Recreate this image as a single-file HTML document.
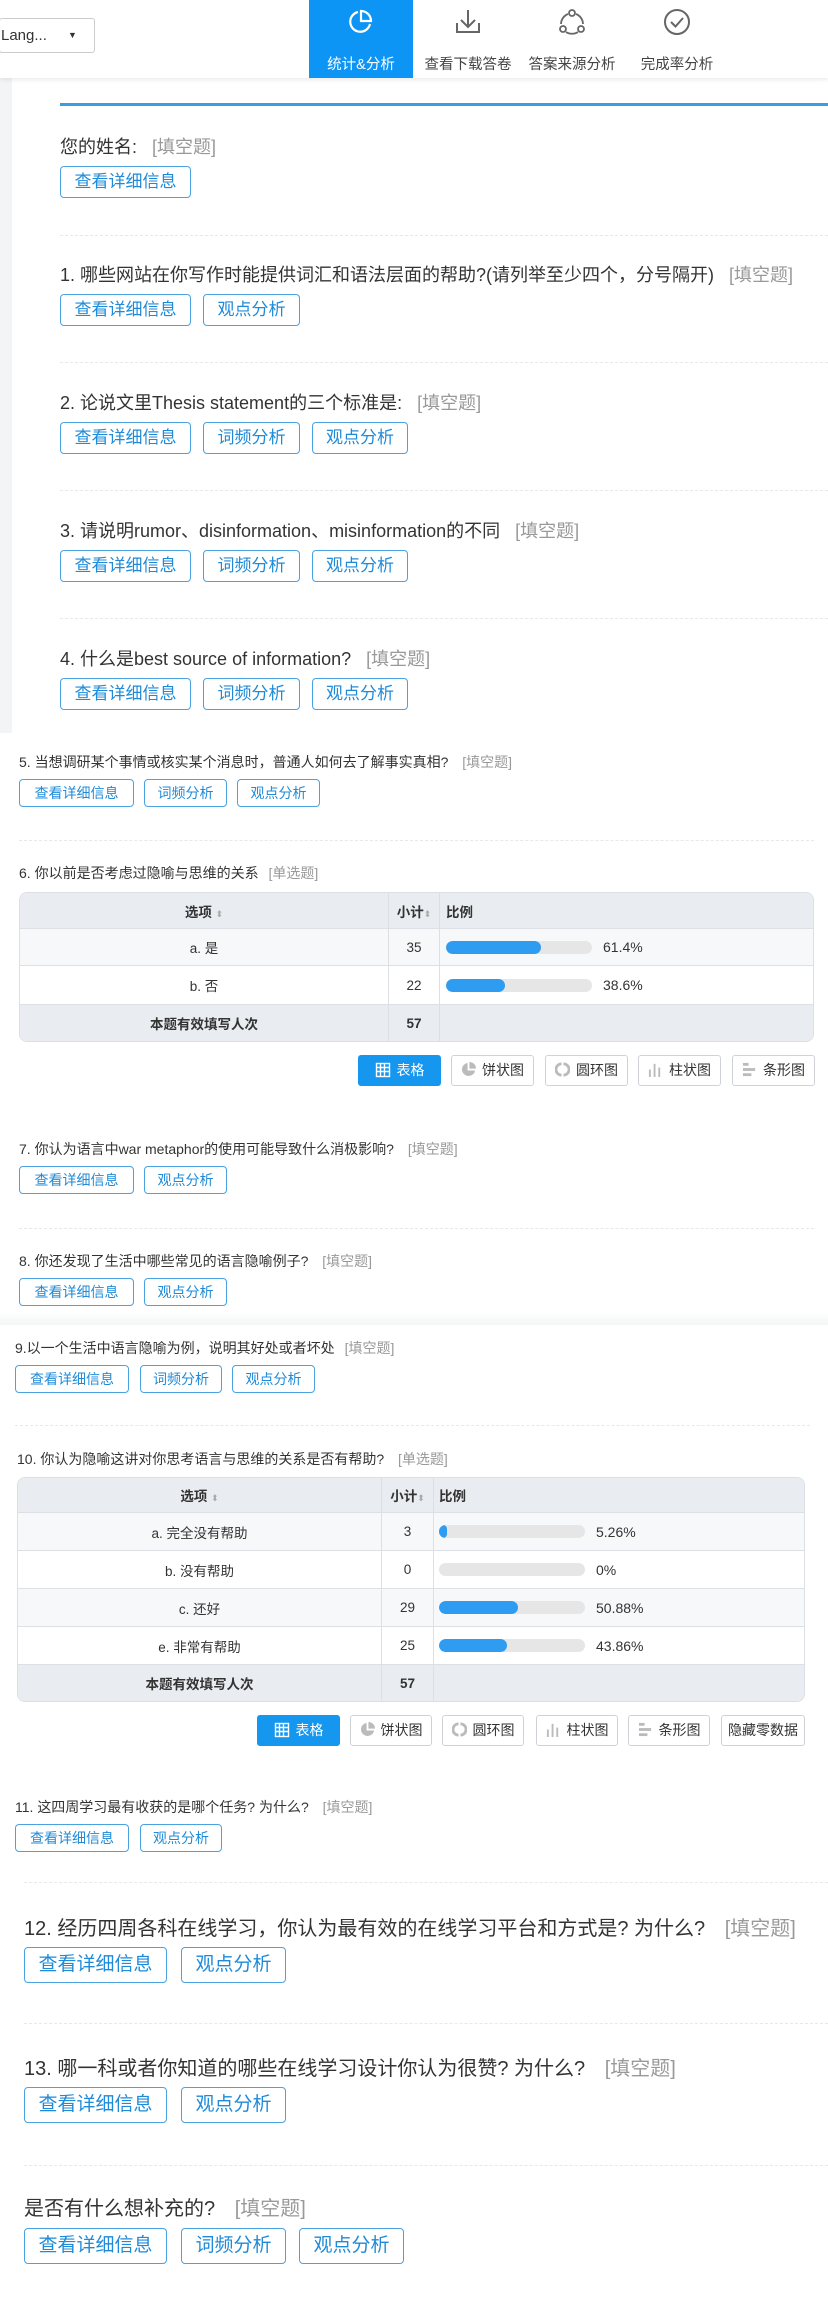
<!DOCTYPE html>
<html><head><meta charset="utf-8">
<style>
*{margin:0;padding:0;box-sizing:border-box}
body{width:828px;height:2309px;position:relative;background:#fff;font-family:"Liberation Sans","Noto Sans CJK SC",sans-serif;color:#333;overflow:hidden}
.a{position:absolute;white-space:nowrap}
.hdr{position:absolute;left:0;top:0;width:828px;height:78px;background:#fff;box-shadow:0 2px 4px rgba(0,0,0,.08);z-index:2}
.tab{position:absolute;top:0;width:104px;height:78px;text-align:center;font-size:14.5px;color:#444}
.tab svg{position:absolute;left:36px;top:6px}
.tab span{position:absolute;left:0;right:0;top:53px}
.tab.on{background:#0d95f6;color:#fff}
.q{position:absolute;white-space:nowrap;color:#333}
.q i{font-style:normal;color:#999;margin-left:10px}
.b{position:absolute;border:1px solid #4aa3e0;border-radius:4px;color:#1f8bd8;text-align:center;background:#fff}
.L .b{height:32px;line-height:30px;font-size:17px}
.S .b{height:28px;line-height:26px;font-size:14px}
.X .b{height:36px;line-height:34px;font-size:19px}
.d{position:absolute;height:0;border-top:1px dashed #e6e9ec}
table{position:absolute;border-collapse:separate;border-spacing:0;border:1px solid #dcdfe3;border-radius:8px;overflow:hidden;font-size:13.5px;color:#333}
td{border-bottom:1px solid #dcdfe3;border-right:1px solid #dcdfe3;text-align:center;padding:0}
tr td:last-child{border-right:none}
tr:last-child td{border-bottom:none}
.th td{background:#e9ecf0;font-weight:bold}
.r1 td{background:#f6f8fa}
.tot td{background:#e9ecf0;font-weight:bold}
.bar{display:inline-block;vertical-align:middle;height:13px;background:#e6e6e6;border-radius:7px;position:relative;overflow:hidden}
.bar b{position:absolute;left:0;top:0;bottom:0;background:#2e9cf0;border-radius:7px}
.pct{display:inline-block;vertical-align:middle;margin-left:11px;font-size:14px}
.sort{color:#aaa;font-size:9px;font-weight:normal}
.cb{position:absolute;height:31px;border:1px solid #cfd3d8;border-radius:3px;font-size:14px;color:#333;line-height:29px;text-align:center;background:#fff}
.cb.on{background:#1596ef;border-color:#1596ef;color:#fff}
.cb svg{vertical-align:middle;margin-right:6px;margin-top:-3px}
</style></head><body>

<div class="hdr">
  <div class="a" style="left:-1px;top:18px;width:96px;height:35px;border:1px solid #ccc;border-radius:3px;font-size:15px;line-height:33px;padding-left:1px">Lang...<span style="position:absolute;left:68px;top:0;font-size:9px">▼</span></div>
  <div class="tab on" style="left:309px"><svg width="32" height="32" viewBox="0 0 32 32" fill="none" stroke="#fff" stroke-width="2.2"><path d="M13 6 A10 10 0 1 0 25 18"/><path d="M16 5 A10 10 0 0 1 26 15 L16 15 Z"/></svg><span>统计&amp;分析</span></div>
  <div class="tab" style="left:416px"><svg width="32" height="32" viewBox="0 0 32 32" fill="none" stroke="#666" stroke-width="2"><path d="M16 4 V20 M9 14 L16 21 L23 14"/><path d="M5 17 V26 H27 V17"/></svg><span>查看下载答卷</span></div>
  <div class="tab" style="left:520px"><svg width="32" height="32" viewBox="0 0 32 32" fill="none" stroke="#666" stroke-width="1.8"><circle cx="16" cy="7" r="3"/><circle cx="7" cy="23" r="3"/><circle cx="25" cy="23" r="3"/><path d="M12 8 A11 11 0 0 0 5 18 M20 8 A11 11 0 0 1 27 18 M10 26 A11 11 0 0 0 22 26"/></svg><span>答案来源分析</span></div>
  <div class="tab" style="left:625px"><svg width="32" height="32" viewBox="0 0 32 32" fill="none" stroke="#666" stroke-width="2"><circle cx="16" cy="16" r="12"/><path d="M10 16 L14.5 20.5 L22 12"/></svg><span>完成率分析</span></div>
</div>

<div class="a" style="left:0;top:78px;width:12px;height:655px;background:#f3f4f5"></div>
<div class="a" style="left:60px;top:103px;width:768px;height:3px;background:#3a9ede"></div>

<div class="L">
  <div class="q" style="left:60px;top:133px;font-size:18px">您的姓名: <i>[填空题]</i></div>
  <div class="b" style="left:60px;top:166px;width:131px">查看详细信息</div>
  <div class="d" style="left:60px;top:235px;width:768px"></div>

  <div class="q" style="left:60px;top:261px;font-size:18px">1. 哪些网站在你写作时能提供词汇和语法层面的帮助?(请列举至少四个，分号隔开) <i>[填空题]</i></div>
  <div class="b" style="left:60px;top:294px;width:131px">查看详细信息</div>
  <div class="b" style="left:203px;top:294px;width:97px">观点分析</div>
  <div class="d" style="left:60px;top:362px;width:768px"></div>

  <div class="q" style="left:60px;top:389px;font-size:18px">2. 论说文里Thesis statement的三个标准是: <i>[填空题]</i></div>
  <div class="b" style="left:60px;top:422px;width:131px">查看详细信息</div>
  <div class="b" style="left:203px;top:422px;width:97px">词频分析</div>
  <div class="b" style="left:312px;top:422px;width:96px">观点分析</div>
  <div class="d" style="left:60px;top:490px;width:768px"></div>

  <div class="q" style="left:60px;top:517px;font-size:18px">3. 请说明rumor、disinformation、misinformation的不同 <i>[填空题]</i></div>
  <div class="b" style="left:60px;top:550px;width:131px">查看详细信息</div>
  <div class="b" style="left:203px;top:550px;width:97px">词频分析</div>
  <div class="b" style="left:312px;top:550px;width:96px">观点分析</div>
  <div class="d" style="left:60px;top:618px;width:768px"></div>

  <div class="q" style="left:60px;top:645px;font-size:18px">4. 什么是best source of information? <i>[填空题]</i></div>
  <div class="b" style="left:60px;top:678px;width:131px">查看详细信息</div>
  <div class="b" style="left:203px;top:678px;width:97px">词频分析</div>
  <div class="b" style="left:312px;top:678px;width:96px">观点分析</div>
</div>

<div class="S">
  <div class="q" style="left:19px;top:752px;font-size:14px">5. 当想调研某个事情或核实某个消息时，普通人如何去了解事实真相? <i>[填空题]</i></div>
  <div class="b" style="left:19px;top:779px;width:115px">查看详细信息</div>
  <div class="b" style="left:144px;top:779px;width:83px">词频分析</div>
  <div class="b" style="left:237px;top:779px;width:83px">观点分析</div>
  <div class="d" style="left:19px;top:840px;width:795px"></div>

  <div class="q" style="left:19px;top:863px;font-size:14px">6. 你以前是否考虑过隐喻与思维的关系 <i style="margin-left:6px">[单选题]</i></div>
  <table style="left:19px;top:892px;width:795px">
    <tr class="th" style="height:36px"><td style="width:369px">选项 <span class="sort">⬍</span></td><td style="width:51px">小计<span class="sort">⬍</span></td><td style="text-align:left;padding-left:6px">比例</td></tr>
    <tr class="r1" style="height:37px"><td>a. 是</td><td>35</td><td style="text-align:left;padding-left:6px"><span class="bar" style="width:146px"><b style="width:95px"></b></span><span class="pct">61.4%</span></td></tr>
    <tr style="height:39px"><td>b. 否</td><td>22</td><td style="text-align:left;padding-left:6px"><span class="bar" style="width:146px"><b style="width:59px"></b></span><span class="pct">38.6%</span></td></tr>
    <tr class="tot" style="height:36px"><td>本题有效填写人次</td><td>57</td><td></td></tr>
  </table>
  <div class="cb on" style="left:358px;top:1055px;width:83px"><svg width="16" height="16" viewBox="0 0 16 16" fill="none" stroke="#fff" stroke-width="1.4"><rect x="1.5" y="1.5" width="13" height="13"/><path d="M1.5 5.5H14.5M1.5 9.5H14.5M5.5 1.5V14.5M9.5 1.5V14.5"/></svg>表格</div>
  <div class="cb" style="left:451px;top:1055px;width:83px"><svg width="15" height="15" viewBox="0 0 16 16"><path d="M7 1 A7 7 0 1 0 15 9 L7 9 Z" fill="#bbb"/><path d="M9 0 A7 7 0 0 1 16 7 L9 7Z" fill="#bbb"/></svg>饼状图</div>
  <div class="cb" style="left:545px;top:1055px;width:83px"><svg width="15" height="15" viewBox="0 0 16 16" fill="none" stroke="#bbb" stroke-width="3"><path d="M7 2 A6 6 0 0 0 7 14 M9 2 A6 6 0 0 1 9 14"/></svg>圆环图</div>
  <div class="cb" style="left:638px;top:1055px;width:83px"><svg width="15" height="15" viewBox="0 0 16 16" fill="#bbb"><rect x="1" y="8" width="2" height="8"/><rect x="6" y="2" width="2" height="14"/><rect x="11" y="6" width="2" height="10"/></svg>柱状图</div>
  <div class="cb" style="left:732px;top:1055px;width:83px"><svg width="15" height="15" viewBox="0 0 16 16" fill="#bbb"><rect x="1" y="1" width="6" height="3"/><rect x="1" y="6.5" width="13" height="3"/><rect x="1" y="12" width="9" height="3"/></svg>条形图</div>

  <div class="q" style="left:19px;top:1139px;font-size:14px">7. 你认为语言中war metaphor的使用可能导致什么消极影响? <i>[填空题]</i></div>
  <div class="b" style="left:19px;top:1166px;width:115px">查看详细信息</div>
  <div class="b" style="left:144px;top:1166px;width:83px">观点分析</div>
  <div class="d" style="left:19px;top:1228px;width:795px"></div>

  <div class="q" style="left:19px;top:1251px;font-size:14px">8. 你还发现了生活中哪些常见的语言隐喻例子? <i>[填空题]</i></div>
  <div class="b" style="left:19px;top:1278px;width:115px">查看详细信息</div>
  <div class="b" style="left:144px;top:1278px;width:83px">观点分析</div>
  <div class="a" style="left:0;top:1312px;width:828px;height:13px;background:linear-gradient(#fff,#f4f5f6)"></div>

  <div class="q" style="left:15px;top:1338px;font-size:14px">9.以一个生活中语言隐喻为例，说明其好处或者坏处 <i style="margin-left:6px">[填空题]</i></div>
  <div class="b" style="left:15px;top:1365px;width:114px">查看详细信息</div>
  <div class="b" style="left:140px;top:1365px;width:82px">词频分析</div>
  <div class="b" style="left:232px;top:1365px;width:83px">观点分析</div>
  <div class="d" style="left:15px;top:1425px;width:795px"></div>

  <div class="q" style="left:17px;top:1449px;font-size:14px">10. 你认为隐喻这讲对你思考语言与思维的关系是否有帮助? <i>[单选题]</i></div>
  <table style="left:17px;top:1477px;width:788px">
    <tr class="th" style="height:35px"><td style="width:364px">选项 <span class="sort">⬍</span></td><td style="width:52px">小计<span class="sort">⬍</span></td><td style="text-align:left;padding-left:5px">比例</td></tr>
    <tr class="r1" style="height:38px"><td>a. 完全没有帮助</td><td>3</td><td style="text-align:left;padding-left:5px"><span class="bar" style="width:146px"><b style="width:8px"></b></span><span class="pct">5.26%</span></td></tr>
    <tr style="height:38px"><td>b. 没有帮助</td><td>0</td><td style="text-align:left;padding-left:5px"><span class="bar" style="width:146px"></span><span class="pct">0%</span></td></tr>
    <tr class="r1" style="height:38px"><td>c. 还好</td><td>29</td><td style="text-align:left;padding-left:5px"><span class="bar" style="width:146px"><b style="width:79px"></b></span><span class="pct">50.88%</span></td></tr>
    <tr style="height:38px"><td>e. 非常有帮助</td><td>25</td><td style="text-align:left;padding-left:5px"><span class="bar" style="width:146px"><b style="width:68px"></b></span><span class="pct">43.86%</span></td></tr>
    <tr class="tot" style="height:36px"><td>本题有效填写人次</td><td>57</td><td></td></tr>
  </table>
  <div class="cb on" style="left:257px;top:1715px;width:83px"><svg width="16" height="16" viewBox="0 0 16 16" fill="none" stroke="#fff" stroke-width="1.4"><rect x="1.5" y="1.5" width="13" height="13"/><path d="M1.5 5.5H14.5M1.5 9.5H14.5M5.5 1.5V14.5M9.5 1.5V14.5"/></svg>表格</div>
  <div class="cb" style="left:350px;top:1715px;width:82px"><svg width="15" height="15" viewBox="0 0 16 16"><path d="M7 1 A7 7 0 1 0 15 9 L7 9 Z" fill="#bbb"/><path d="M9 0 A7 7 0 0 1 16 7 L9 7Z" fill="#bbb"/></svg>饼状图</div>
  <div class="cb" style="left:442px;top:1715px;width:82px"><svg width="15" height="15" viewBox="0 0 16 16" fill="none" stroke="#bbb" stroke-width="3"><path d="M7 2 A6 6 0 0 0 7 14 M9 2 A6 6 0 0 1 9 14"/></svg>圆环图</div>
  <div class="cb" style="left:536px;top:1715px;width:82px"><svg width="15" height="15" viewBox="0 0 16 16" fill="#bbb"><rect x="1" y="8" width="2" height="8"/><rect x="6" y="2" width="2" height="14"/><rect x="11" y="6" width="2" height="10"/></svg>柱状图</div>
  <div class="cb" style="left:628px;top:1715px;width:82px"><svg width="15" height="15" viewBox="0 0 16 16" fill="#bbb"><rect x="1" y="1" width="6" height="3"/><rect x="1" y="6.5" width="13" height="3"/><rect x="1" y="12" width="9" height="3"/></svg>条形图</div>
  <div class="cb" style="left:721px;top:1715px;width:84px">隐藏零数据</div>

  <div class="q" style="left:15px;top:1797px;font-size:14px">11. 这四周学习最有收获的是哪个任务? 为什么? <i>[填空题]</i></div>
  <div class="b" style="left:15px;top:1824px;width:114px">查看详细信息</div>
  <div class="b" style="left:140px;top:1824px;width:82px">观点分析</div>
</div>

<div class="X">
  <div class="d" style="left:24px;top:1882px;width:804px"></div>
  <div class="q" style="left:24px;top:1912px;font-size:20px">12. 经历四周各科在线学习，你认为最有效的在线学习平台和方式是? 为什么? <i style="margin-left:14px">[填空题]</i></div>
  <div class="b" style="left:24px;top:1947px;width:143px">查看详细信息</div>
  <div class="b" style="left:181px;top:1947px;width:105px">观点分析</div>
  <div class="d" style="left:24px;top:2023px;width:804px"></div>

  <div class="q" style="left:24px;top:2052px;font-size:20px">13. 哪一科或者你知道的哪些在线学习设计你认为很赞? 为什么? <i style="margin-left:14px">[填空题]</i></div>
  <div class="b" style="left:24px;top:2087px;width:143px">查看详细信息</div>
  <div class="b" style="left:181px;top:2087px;width:105px">观点分析</div>
  <div class="d" style="left:24px;top:2165px;width:804px"></div>

  <div class="q" style="left:24px;top:2192px;font-size:20px">是否有什么想补充的? <i style="margin-left:14px">[填空题]</i></div>
  <div class="b" style="left:24px;top:2228px;width:143px">查看详细信息</div>
  <div class="b" style="left:181px;top:2228px;width:105px">词频分析</div>
  <div class="b" style="left:299px;top:2228px;width:105px">观点分析</div>
</div>
</body></html>
